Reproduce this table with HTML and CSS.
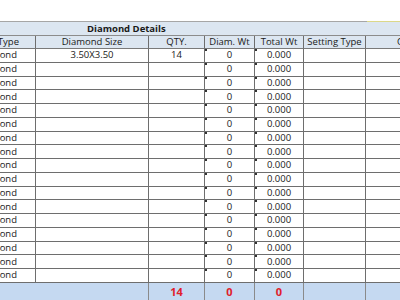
FILE: index.html
```html
<!DOCTYPE html>
<html>
<head>
<meta charset="utf-8">
<link rel="stylesheet" href="styles.css">
</head>
<body>
<div class="sheet">
  <div class="topline"></div>
  <div class="title"><span class="title-text">Diamond Details</span></div>
  <div class="grid">
    <div class="c hd clip"><span>Diamond Type</span></div>
    <div class="c hd">Diamond Size</div>
    <div class="c hd">QTY.</div>
    <div class="c hd">Diam. Wt</div>
    <div class="c hd">Total Wt</div>
    <div class="c hd">Setting Type</div>
    <div class="c hd clipl">Clarity</div>

    <div class="c clip d"><span>Diamond</span></div><div class="c">3.50X3.50</div><div class="c">14</div><div class="c mk">0</div><div class="c mk">0.000</div><div class="c"></div><div class="c"></div>
    <div class="c clip d"><span>Diamond</span></div><div class="c"></div><div class="c"></div><div class="c mk">0</div><div class="c mk">0.000</div><div class="c"></div><div class="c"></div>
    <div class="c clip d"><span>Diamond</span></div><div class="c"></div><div class="c"></div><div class="c mk">0</div><div class="c mk">0.000</div><div class="c"></div><div class="c"></div>
    <div class="c clip d"><span>Diamond</span></div><div class="c"></div><div class="c"></div><div class="c mk">0</div><div class="c mk">0.000</div><div class="c"></div><div class="c"></div>
    <div class="c clip d"><span>Diamond</span></div><div class="c"></div><div class="c"></div><div class="c mk">0</div><div class="c mk">0.000</div><div class="c"></div><div class="c"></div>
    <div class="c clip d"><span>Diamond</span></div><div class="c"></div><div class="c"></div><div class="c mk">0</div><div class="c mk">0.000</div><div class="c"></div><div class="c"></div>
    <div class="c clip d"><span>Diamond</span></div><div class="c"></div><div class="c"></div><div class="c mk">0</div><div class="c mk">0.000</div><div class="c"></div><div class="c"></div>
    <div class="c clip d"><span>Diamond</span></div><div class="c"></div><div class="c"></div><div class="c mk">0</div><div class="c mk">0.000</div><div class="c"></div><div class="c"></div>
    <div class="c clip d"><span>Diamond</span></div><div class="c"></div><div class="c"></div><div class="c mk">0</div><div class="c mk">0.000</div><div class="c"></div><div class="c"></div>
    <div class="c clip d"><span>Diamond</span></div><div class="c"></div><div class="c"></div><div class="c mk">0</div><div class="c mk">0.000</div><div class="c"></div><div class="c"></div>
    <div class="c clip d"><span>Diamond</span></div><div class="c"></div><div class="c"></div><div class="c mk">0</div><div class="c mk">0.000</div><div class="c"></div><div class="c"></div>
    <div class="c clip d"><span>Diamond</span></div><div class="c"></div><div class="c"></div><div class="c mk">0</div><div class="c mk">0.000</div><div class="c"></div><div class="c"></div>
    <div class="c clip d"><span>Diamond</span></div><div class="c"></div><div class="c"></div><div class="c mk">0</div><div class="c mk">0.000</div><div class="c"></div><div class="c"></div>
    <div class="c clip d"><span>Diamond</span></div><div class="c"></div><div class="c"></div><div class="c mk">0</div><div class="c mk">0.000</div><div class="c"></div><div class="c"></div>
    <div class="c clip d"><span>Diamond</span></div><div class="c"></div><div class="c"></div><div class="c mk">0</div><div class="c mk">0.000</div><div class="c"></div><div class="c"></div>
    <div class="c clip d"><span>Diamond</span></div><div class="c"></div><div class="c"></div><div class="c mk">0</div><div class="c mk">0.000</div><div class="c"></div><div class="c"></div>
    <div class="c clip d"><span>Diamond</span></div><div class="c"></div><div class="c"></div><div class="c mk">0</div><div class="c mk">0.000</div><div class="c"></div><div class="c"></div>

    <div class="f fspan"></div><div class="f tot">14</div><div class="f tot">0</div><div class="f tot">0</div><div class="f"></div><div class="f"></div>
  </div>
</div>
</body>
</html>
```
FILE: styles.css
```css
html, body {
  margin: 0;
  padding: 0;
  background: #ffffff;
}
body {
  width: 400px;
  height: 300px;
  overflow: hidden;
  font-family: "Open Sans", "Liberation Sans", sans-serif;
  font-size: 9.5px;
  color: #1a1a1a;
}
.sheet {
  padding-top: 21px;
}
.topline {
  height: 1px;
  background: linear-gradient(to right, #a6a6a6 0, #a6a6a6 367px, #dcd88a 367px, #dcd88a 100%);
}
.title {
  height: 13px;
  background: #dce6f1;
  border-bottom: 1px solid #8c8c8c;
  display: flex;
  align-items: center;
  padding-left: 87px;
  font-weight: bold;
  font-size: 9.5px;
  line-height: 13px;
}
.grid {
  display: grid;
  grid-template-columns: 36px 113px 56px 50px 49px 62px 34px;
  grid-template-rows: 13px repeat(17, 13.76px) 17px;
}
.c {
  border-right: 1px solid #6e6e6e;
  border-bottom: 1px solid #6e6e6e;
  display: flex;
  align-items: center;
  justify-content: center;
  white-space: nowrap;
  overflow: hidden;
  line-height: 12px;
  position: relative;
  box-sizing: border-box;
}
.hd {
  background: #dce6f1;
  border-bottom-color: #7a7a7a;
}
.clip {
  justify-content: flex-end;
  padding-right: 16px;
}
.clip.d {
  padding-right: 18px;
}
.clipl {
  justify-content: flex-start;
  padding-left: 31px;
  border-right: none;
}
.c:nth-child(7n) {
  border-right: none;
}
.mk::before {
  content: "";
  position: absolute;
  left: 0;
  top: 0;
  width: 2px;
  height: 2px;
  background: #333;
}
.f {
  background: #c5d9f1;
  border-right: 1px solid #8a8a8a;
  display: flex;
  align-items: center;
  justify-content: center;
  box-sizing: border-box;
}
.fspan {
  grid-column: span 2;
}
.f:last-child {
  border-right: none;
}
.tot {
  color: #e0202a;
  font-weight: bold;
  font-size: 11px;
}
```
